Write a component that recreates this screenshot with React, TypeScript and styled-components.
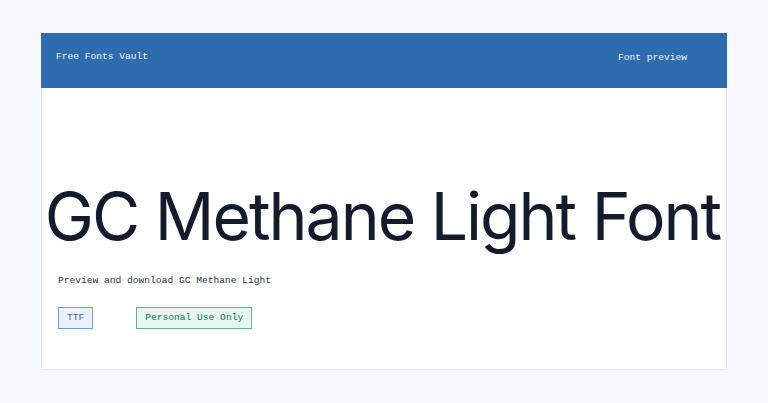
import styled, { createGlobalStyle } from 'styled-components';

const GlobalStyle = createGlobalStyle`
  html, body {
    margin: 0;
    padding: 0;
    background: #f5f9fd;
  }
  body {
    font-family: "Liberation Mono", "DejaVu Sans Mono", monospace;
  }
`;

const Page = styled.div`
  padding: 33px 41px 0 41px;
`;

const Card = styled.div`
  background: #ffffff;
  border: 1px solid #e3e9f1;
  border-top: none;
  width: 686px;
  box-sizing: border-box;
`;

const Header = styled.header`
  display: flex;
  justify-content: space-between;
  align-items: flex-start;
  height: 55px;
  box-sizing: border-box;
  margin: 0 -1px;
  padding: 18px 40px 0 15px;
  background: #2f6cad;
  color: #eef3fa;
  font-size: 9.6px;
  line-height: 12px;
`;

const Brand = styled.div``;

const NavLink = styled.div`
  margin-top: 1px;
`;

const Body = styled.main`
  display: flex;
  flex-direction: column;
  padding: 88px 16px 40px 16px;
`;

const Title = styled.h1`
  margin: 0 -16px 0 -19px;
  font-family: Inter, "Noto Sans", sans-serif;
  font-weight: 400;
  font-size: 66px;
  line-height: 80px;
  letter-spacing: -2px;
  color: #131b2c;
  text-align: center;
  white-space: nowrap;
`;

const Subtitle = styled.p`
  margin: 17px 0 0 0;
  font-size: 9.6px;
  line-height: 15px;
  color: #2a3342;
`;

const Badges = styled.div`
  display: flex;
  gap: 43px;
  margin-top: 19px;
`;

const Badge = styled.span<{ $tone: 'blue' | 'green' }>`
  display: inline-block;
  padding: 4px 8px;
  font-size: 9.6px;
  line-height: 12px;
  border: 1px solid ${({ $tone }) => ($tone === 'blue' ? '#6f9fd6' : '#6aad9f')};
  background: ${({ $tone }) => ($tone === 'blue' ? '#e9f2fd' : '#e7f6f1')};
  color: ${({ $tone }) => ($tone === 'blue' ? '#2f6cad' : '#17705f')};
`;

export default function App() {
  return (
    <>
      <GlobalStyle />
      <Page>
        <Card>
          <Header>
            <Brand>Free Fonts Vault</Brand>
            <NavLink>Font preview</NavLink>
          </Header>
          <Body>
            <Title>GC Methane Light Font</Title>
            <Subtitle>Preview and download GC Methane Light</Subtitle>
            <Badges>
              <Badge $tone="blue">TTF</Badge>
              <Badge $tone="green">Personal Use Only</Badge>
            </Badges>
          </Body>
        </Card>
      </Page>
    </>
  );
}
